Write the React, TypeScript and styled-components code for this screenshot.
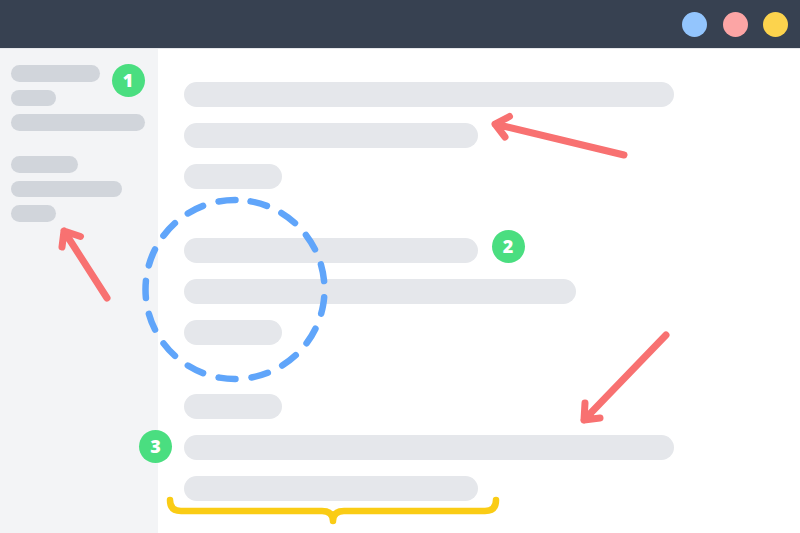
import React from "react";
import styled, { createGlobalStyle } from "styled-components";

const Global = createGlobalStyle`
  html, body { margin: 0; padding: 0; background: #ffffff; }
  body { font-family: "Open Sans", "Noto Sans", sans-serif; }
`;

const Page = styled.div`
  position: relative;
  width: 800px;
  height: 533px;
  display: flex;
  flex-direction: column;
  overflow: hidden;
  background: #ffffff;
`;

const TitleBar = styled.header`
  height: 48px;
  flex: none;
  background: #374151;
  border-bottom: 1px solid #e5e7eb;
  display: flex;
  align-items: center;
  justify-content: flex-end;
  gap: 15.5px;
  padding-right: 12px;
`;

const Dot = styled.span<{ $color: string }>`
  width: 25px;
  height: 25px;
  border-radius: 50%;
  background: ${(p) => p.$color};
`;

const Body = styled.div`
  flex: 1;
  display: flex;
  min-height: 0;
`;

const Sidebar = styled.aside`
  width: 158px;
  flex: none;
  background: #f3f4f6;
  padding: 16px 0 0 11px;
  box-sizing: border-box;
  display: flex;
  flex-direction: column;
  gap: 25.5px;
`;

const SideGroup = styled.div`
  display: flex;
  flex-direction: column;
  gap: 8px;
`;

const SideBar = styled.div<{ $w: number }>`
  width: ${(p) => p.$w}px;
  height: 16.5px;
  border-radius: 9px;
  background: #d1d5db;
`;

const Main = styled.main`
  flex: 1;
  padding: 33px 0 0 26px;
  display: flex;
  flex-direction: column;
  gap: 49.5px;
`;

const Group = styled.div`
  width: 490px;
  display: flex;
  flex-direction: column;
  gap: 16.5px;
`;

const Line = styled.div<{ $pct: number }>`
  width: ${(p) => p.$pct}%;
  height: 24.5px;
  border-radius: 13px;
  background: #e5e7eb;
`;

const Badge = styled.div<{ $x: number; $y: number }>`
  position: absolute;
  left: ${(p) => p.$x - 16.5}px;
  top: ${(p) => p.$y - 16.5}px;
  width: 33px;
  height: 33px;
  border-radius: 50%;
  background: #4ade80;
  color: #ffffff;
  font-family: "Open Sans", "Noto Sans", sans-serif;
  font-weight: 800;
  font-size: 18px;
  line-height: 33px;
  text-align: center;
`;

const Overlay = styled.svg`
  position: absolute;
  left: 0;
  top: 0;
  width: 800px;
  height: 533px;
  pointer-events: none;
`;

const sideGroups = [
  [89, 45, 134],
  [67, 111, 45],
];

const mainGroups = [
  [100, 60, 20],
  [60, 80, 20],
  [20, 100, 60],
];

export default function App() {
  return (
    <>
      <Global />
      <Page>
        <TitleBar>
          <Dot $color="#93c5fd" />
          <Dot $color="#fca5a5" />
          <Dot $color="#fcd34d" />
        </TitleBar>
        <Body>
          <Sidebar>
            {sideGroups.map((g, i) => (
              <SideGroup key={i}>
                {g.map((w, j) => (
                  <SideBar key={j} $w={w} />
                ))}
              </SideGroup>
            ))}
          </Sidebar>
          <Main>
            {mainGroups.map((g, i) => (
              <Group key={i}>
                {g.map((p, j) => (
                  <Line key={j} $pct={p} />
                ))}
              </Group>
            ))}
          </Main>
        </Body>

        <Overlay viewBox="0 0 800 533">
          <g fill="none" stroke="#f87171" strokeWidth={7} strokeLinecap="round" strokeLinejoin="round">
            <path d="M107 298 L64 231 M80.5 236.5 L64 231 L62 247" />
            <path d="M624 155 L495 124 M509.5 116.5 L495 124 L505 137" />
            <path d="M666 335 L584 420 M585 403 L584 420 L600 418" />
          </g>
          <circle
            cx={235}
            cy={289.5}
            r={89.5}
            fill="none"
            stroke="#60a5fa"
            strokeWidth={6.5}
            strokeLinecap="round"
            strokeDasharray="17 16.08"
            transform="rotate(-80 235 289.5)"
          />
          <path
            d="M170 500 Q170 511 181 511 L322 511 Q333 511 333 521 Q333 511 344 511 L485 511 Q496 511 496 500"
            fill="none"
            stroke="#facc15"
            strokeWidth={6.5}
            strokeLinecap="round"
            strokeLinejoin="round"
          />
        </Overlay>

        <Badge $x={128} $y={80}>1</Badge>
        <Badge $x={508} $y={246}>2</Badge>
        <Badge $x={155.5} $y={446.5}>3</Badge>
      </Page>
    </>
  );
}
